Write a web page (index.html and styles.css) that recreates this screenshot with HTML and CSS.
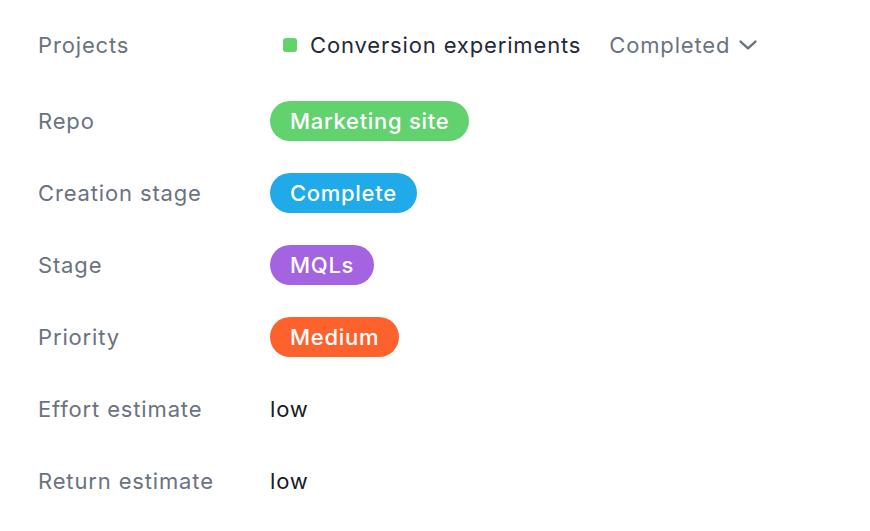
FILE: index.html
```html
<!DOCTYPE html>
<html>
<head>
<meta charset="utf-8">
<link rel="stylesheet" href="styles.css">
</head>
<body>
<div class="props">
  <div class="row first">
    <div class="label">Projects</div>
    <div class="value">
      <span class="project"><span class="dot"></span>Conversion experiments</span>
      <span class="status">Completed
        <svg class="chev" width="18" height="10" viewBox="0 0 18 10"><path d="M1.6 1.6L9 8.4L16.4 1.6" fill="none" stroke="#6b7280" stroke-width="2.4" stroke-linecap="round" stroke-linejoin="round"/></svg>
      </span>
    </div>
  </div>
  <div class="row">
    <div class="label">Repo</div>
    <div class="value"><span class="pill green">Marketing site</span></div>
  </div>
  <div class="row">
    <div class="label">Creation stage</div>
    <div class="value"><span class="pill blue">Complete</span></div>
  </div>
  <div class="row">
    <div class="label">Stage</div>
    <div class="value"><span class="pill purple">MQLs</span></div>
  </div>
  <div class="row">
    <div class="label">Priority</div>
    <div class="value"><span class="pill orange">Medium</span></div>
  </div>
  <div class="row">
    <div class="label">Effort estimate</div>
    <div class="value"><span class="text">low</span></div>
  </div>
  <div class="row">
    <div class="label">Return estimate</div>
    <div class="value"><span class="text">low</span></div>
  </div>
</div>
</body>
</html>
```
FILE: styles.css
```css
html, body {
  margin: 0;
  padding: 0;
  background: #ffffff;
}
body {
  font-family: Inter, "Noto Sans", sans-serif;
  font-size: 22px;
  letter-spacing: 0.85px;
}
.props {
  display: flex;
  flex-direction: column;
  gap: 32px;
  padding: 25px 0 0 38px;
}
.row {
  display: flex;
  align-items: center;
  height: 40px;
}
.row.first {
  margin-bottom: 4px;
}
.label {
  width: 232px;
  color: #6b7280;
}
.value {
  display: flex;
  align-items: center;
}
.project {
  display: flex;
  align-items: center;
  color: #1f2937;
  padding-left: 13px;
}
.dot {
  width: 14px;
  height: 14px;
  border-radius: 3px;
  background: #62d26f;
  margin-right: 13px;
}
.status {
  display: flex;
  align-items: center;
  color: #6b7280;
  margin-left: 28px;
  gap: 9px;
}
.chev {
  display: block;
}
.pill {
  display: inline-flex;
  align-items: center;
  height: 40px;
  padding: 0 20px;
  border-radius: 20px;
  color: #ffffff;
  font-weight: 500;
  letter-spacing: 0.7px;
}
.green { background: #62d26f; }
.blue { background: #20aaea; }
.purple { background: #a463e0; }
.orange { background: #fd612c; }
.text {
  color: #151b26;
}
```
